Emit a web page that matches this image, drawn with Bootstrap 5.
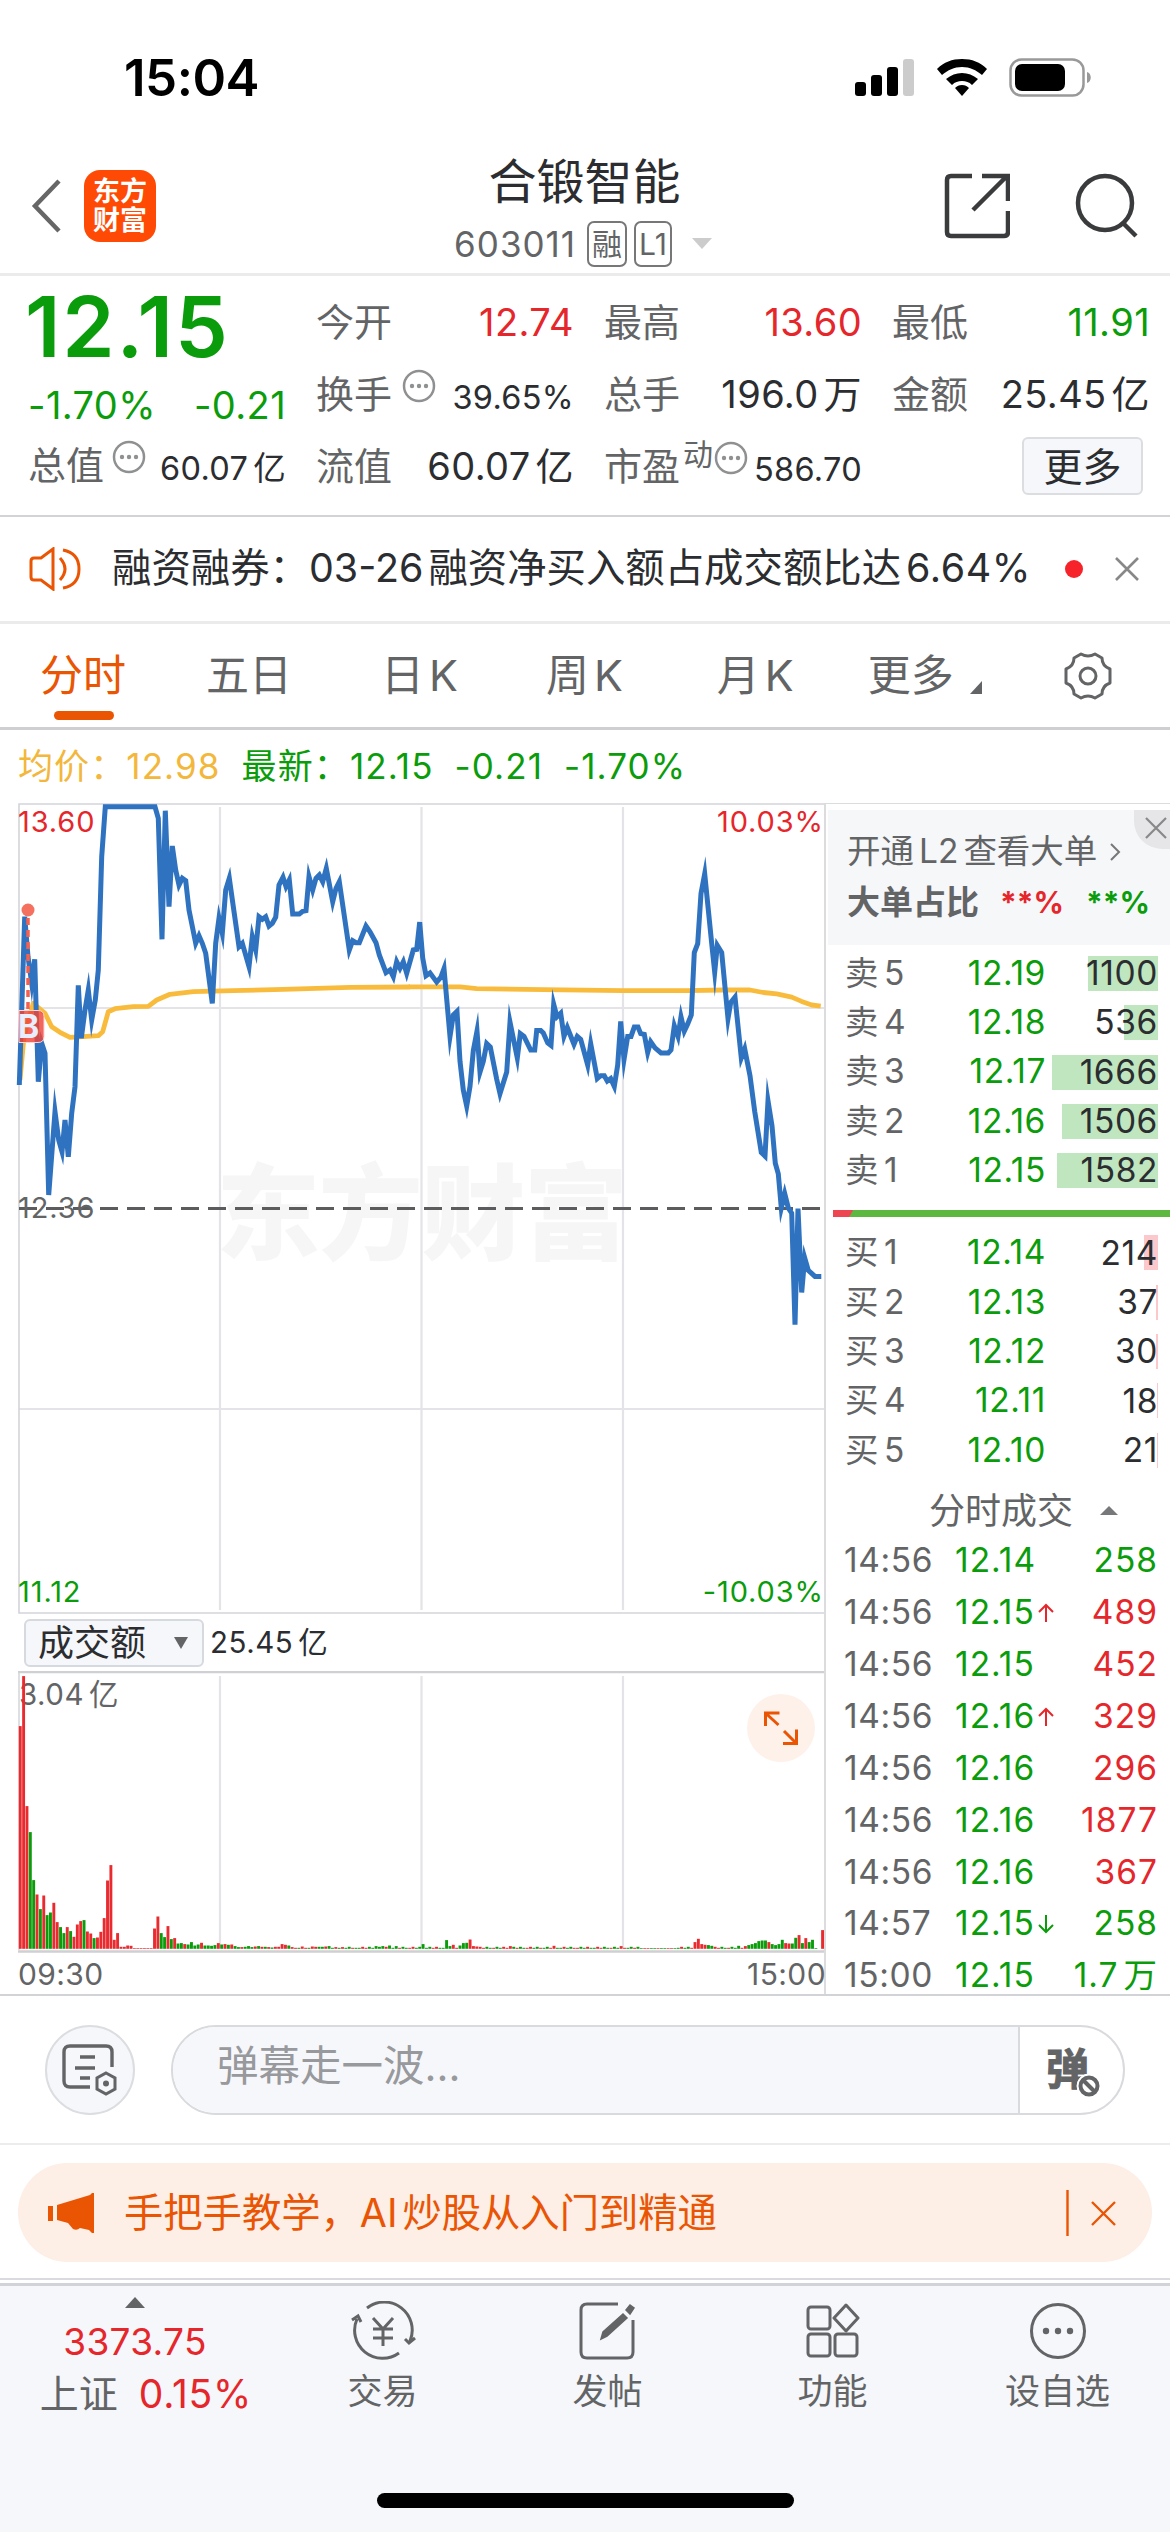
<!DOCTYPE html>
<html lang="zh-CN">
<head>
<meta charset="utf-8">
<meta name="viewport" content="width=device-width, initial-scale=1">
<title>合锻智能 603011</title>
<link href="https://cdn.jsdelivr.net/npm/bootstrap@5.3.0/dist/css/bootstrap.min.css" rel="stylesheet">
<style>
:root{--up:#e5262b;--down:#0a9c0a;--ink:#2b2d30;--dim:#636466;--brand:#ea5504;--soft:#f6f7fa;--rule:#d2d3d6}
body{width:1170px;height:2532px;overflow:hidden;background:#fff;color:var(--ink);font-family:Inter,"Noto Sans CJK SC",sans-serif;line-height:1;font-size:37px}
svg{display:block;flex:none}
svg text{font-family:Inter,"Noto Sans CJK SC",sans-serif}
.up{color:var(--up)}.down{color:var(--down)}.dim{color:var(--dim)}.brand{color:var(--brand)}
/* breathing space between latin digits and a following or leading Han character */
.gl{margin-left:5px}.gr{margin-right:5px}
.statusbar{height:118px;padding:37px 78px 0 124px}
.clock{font-size:51px;font-weight:600;line-height:82px;letter-spacing:-.5px;color:#000}
.statusbar svg{margin-top:21px}
.topbar{height:158px;border-bottom:3px solid #ebebec;padding:0 32px 0 31px}
.topside{width:320px;margin-top:21px}
.applogo{width:72px;height:72px;border-radius:16px;background:#ff4a05;color:#fff;font-size:27px;font-weight:700;line-height:29px;margin-left:23px}
.stockname{font-size:48px;line-height:60px}
.code{font-size:35px;line-height:64px;letter-spacing:1px;margin-left:-3px}
.tagbox{border:2px solid #777;border-radius:7px;height:46px;line-height:43px;font-size:30px;padding:0 3px;letter-spacing:0}
.quote{height:241px;border-bottom:2px solid var(--rule);padding:10px 19px 0 28px;gap:30px}
.quote>div{width:258px}
.qrow{height:72px}
.qlab{font-size:38px;color:var(--dim)}
.qval{font-size:38px;letter-spacing:.4px}
.qsm{font-size:32.5px;padding-top:9px;letter-spacing:.3px}
.bigprice{font-size:84px;font-weight:600;height:82px;line-height:82px;letter-spacing:1.8px;margin-left:-3px}
.morebtn{width:121px;height:58px;background:#f5f7fa;border:2px solid #dcdde0;border-radius:6px;font-size:39px;margin-right:7px;color:var(--ink)}
.notice{height:107px;border-bottom:3px solid #ebebec;padding:0 31px 0 29px;font-size:39.4px}
.reddot{width:18px;height:18px;border-radius:50%;background:#f6242a}
.tabs{height:106px;border-bottom:3px solid #cfcfd1;font-size:43px;color:var(--dim)}
.tabs>div{position:relative;white-space:nowrap}
.tabs .on::after{content:"";position:absolute;left:14px;width:60px;bottom:-23px;height:9px;border-radius:5px;background:var(--brand)}
.avgline{height:73px;padding:0 18px;font-size:35px;letter-spacing:1.1px}
.leftcol{width:826px;border-right:2px solid #dcdcdf}
.selrow{height:57px;padding:5px 0 4px 24px}
.selbox{width:180px;height:48px;border:2px solid #d6d9dd;border-radius:6px;background:#f5f7fa;font-size:36px;padding:0 14px 0 12px}
.rightcol{width:344px;height:1191px;overflow:hidden;border-top:1px solid #dcdcdf}
.l2box{margin:6px 0 0 2px;height:135px;background:#f6f7f9;padding:8px 0 0 19px;position:relative;font-size:33.5px;color:var(--dim)}
.l2x{position:absolute;right:0;top:0;width:36px;height:39px;background:#e6e6e9;border-bottom-left-radius:28px}
.lv{height:49.3px;padding:0 12px 0 19px;font-size:33.5px;position:relative;letter-spacing:.6px}
.lv .p{width:130px;text-align:right;position:absolute;right:124px}
.lv .q{position:relative;padding-right:0;height:35px;line-height:35px}
.lv .bar{position:absolute;right:12px;height:35px;top:7px}
.sell .bar{background:#bfe6bf}.buy .bar{background:#fbc9cb}
.ratio{height:7px;margin:15px 2px 11px 7px;background:linear-gradient(120deg,#ee4650 17px,#5cb83f 18px)}
.dealhd{height:60px;padding:12px 0 0 103px;font-size:36px}
.dl{height:51.9px;padding:0 12px 0 18px;font-size:33.5px;letter-spacing:1px}
.dl .t{width:111px;color:var(--dim);letter-spacing:.6px}
.danmu{height:151px;border-top:2px solid var(--rule);border-bottom:2px solid #ececef;padding:0 45px}
.roundbtn{width:90px;height:90px;border:2px solid #dcdde0;border-radius:50%;background:var(--soft)}
.pill{width:954px;height:90px;border:2px solid #d9dadd;border-radius:45px;overflow:hidden}
.pill .inp{width:847px;background:var(--soft);border-right:2px solid #d9dadd;padding-left:44px;line-height:78px;font-size:41.5px;color:#98999c}
.bannerwrap{padding:18px 18px 16px;border-bottom:2px solid #dadbde}
.banner{height:99px;border-radius:50px;background:#fdeee6;padding:0 36px 0 29px;font-size:39.3px}
.footnav{margin-top:3px;height:250px;border-top:3px solid var(--rule);background:#f5f7fa;font-size:35px;color:var(--dim);position:relative}
.footnav>.cell{width:225px;height:150px;padding-top:15px}
.homebar{position:absolute;left:377px;top:207px;width:417px;height:15px;border-radius:8px;background:#000}
</style>
<script src="https://cdn.jsdelivr.net/npm/bootstrap@5.3.0/dist/js/bootstrap.bundle.min.js"></script>
</head>
<body>
<svg width="0" height="0" class="position-absolute"><defs>
<symbol id="dots" viewBox="0 0 34 34"><circle cx="17" cy="17" r="15" fill="none" stroke="#8f9092" stroke-width="2.500"/><g fill="#8f9092"><circle cx="10" cy="17" r="2.200"/><circle cx="17" cy="17" r="2.200"/><circle cx="24" cy="17" r="2.200"/></g></symbol>
</defs></svg>

<header>
<div class="statusbar d-flex justify-content-between align-items-start">
  <div class="clock">15:04</div>
  <svg width="237" height="40" viewBox="0 0 237 40">
    <rect x="0" y="24" width="11" height="14" rx="3"/><rect x="16" y="17" width="11" height="21" rx="3"/><rect x="32" y="9" width="11" height="29" rx="3"/><rect x="48" y="1" width="11" height="37" rx="3" fill="#ccc"/>
    <path d="M107 1c10 0 18 3 25 10l-5 6c-6-5-12-8-20-8s-14 3-20 8l-5-6c7-7 15-10 25-10zM107 15c6 0 11 2 16 6l-6 6c-3-3-6-4-10-4s-7 1-10 4l-6-6c5-4 10-6 16-6zM107 27c3 0 5 1 7 3l-7 8-7-8c2-2 4-3 7-3z"/>
    <rect x="155.500" y="1.500" width="73" height="36" rx="11" fill="none" stroke="#999" stroke-width="2.500"/><rect x="160" y="6" width="50" height="27" rx="7"/><path d="M232 14c5 1 5 10 0 11z" fill="#999"/>
  </svg>
</div>
<div class="topbar d-flex align-items-center justify-content-between">
  <div class="topside d-flex align-items-center">
    <svg width="30" height="54" viewBox="0 0 30 54" fill="none" stroke="#666" stroke-width="4.500"><path d="M28 2 4 27l24 25"/></svg>
    <div class="applogo text-center d-flex flex-column justify-content-center"><span>东方</span><span>财富</span></div>
  </div>
  <div class="text-center" style="margin-top:36px">
    <div class="stockname">合锻智能</div>
    <div class="code dim d-flex align-items-center justify-content-center"><span>603011</span><span class="tagbox" style="margin-left:11px">融</span><span class="tagbox" style="margin-left:7px">L1</span><svg style="margin-left:20px" width="20" height="11"><path d="M0 0h20L10 11z" fill="#ccc"/></svg></div>
  </div>
  <div class="topside d-flex justify-content-end">
    <svg width="66" height="66" viewBox="0 0 66 66" fill="none" stroke="#3a3b3d" stroke-width="4.500"><path d="M28 3H7q-4 0-4 4v52q0 4 4 4h53q4 0 4-4V38M38 3h26v25M63 3 29 37"/></svg>
    <svg class="ms-5" width="80" height="66" viewBox="-14 0 80 66" fill="none" stroke="#3a3b3d" stroke-width="4.500"><circle cx="33" cy="30" r="27"/><path d="M51 50l13 13"/></svg>
  </div>
</div>
</header>

<section class="quote d-flex">
  <div>
    <div class="bigprice down">12.15</div>
    <div class="d-flex justify-content-between align-items-center qval down" style="height:74px"><span>-1.70%</span><span>-0.21</span></div>
    <div class="d-flex align-items-center" style="height:46px"><span class="qlab">总值</span><svg width="34" height="34" class="ms-2 mb-3"><use href="#dots"/></svg><span class="qsm ms-auto text-nowrap">60.07<span class="gl">亿</span></span></div>
  </div>
  <div>
    <div class="qrow d-flex align-items-center justify-content-between"><span class="qlab">今开</span><span class="qval up">12.74</span></div>
    <div class="qrow d-flex align-items-center"><span class="qlab">换手</span><svg width="34" height="34" style="margin-left:10px" class="mb-3"><use href="#dots"/></svg><span class="qsm ms-auto">39.65%</span></div>
    <div class="qrow d-flex align-items-center justify-content-between"><span class="qlab">流值</span><span class="qval">60.07<span class="gl">亿</span></span></div>
  </div>
  <div>
    <div class="qrow d-flex align-items-center justify-content-between"><span class="qlab">最高</span><span class="qval up">13.60</span></div>
    <div class="qrow d-flex align-items-center justify-content-between"><span class="qlab">总手</span><span class="qval">196.0<span class="gl">万</span></span></div>
    <div class="qrow d-flex align-items-center"><span class="qlab">市盈</span><span class="dim mb-4" style="font-size:30px;margin-left:3px">动</span><svg width="34" height="34" class="mb-3" style="margin-left:1px"><use href="#dots"/></svg><span class="qsm ms-auto">586.70</span></div>
  </div>
  <div>
    <div class="qrow d-flex align-items-center justify-content-between"><span class="qlab">最低</span><span class="qval down">11.91</span></div>
    <div class="qrow d-flex align-items-center justify-content-between"><span class="qlab">金额</span><span class="qval">25.45<span class="gl">亿</span></span></div>
    <div class="qrow d-flex align-items-center justify-content-end"><button class="morebtn p-0 lh-1">更多</button></div>
  </div>
</section>

<section class="notice d-flex align-items-center">
  <svg width="52" height="44" viewBox="0 0 52 44" fill="none" stroke="#ea5504" stroke-width="3"><path d="M24 2v40L12 33H5q-3 0-3-3V14q0-3 3-3h7zM31 11q10 11 0 22M34 3q16 3 16 19T34 41"/></svg>
  <span class="text-nowrap" style="margin-left:31px">融资融券：<span class="gr">03-26</span>融资净买入额占成交额比达<span class="gl" style="letter-spacing:.6px">6.64%</span></span>
  <span class="reddot ms-auto"></span>
  <svg style="margin-left:32px" width="24" height="24" viewBox="0 0 24 24" stroke="#888" stroke-width="2.600"><path d="M1 1l22 22M23 1 1 23"/></svg>
</section>

<nav class="tabs d-flex align-items-center">
  <div class="on brand" style="margin-left:40px">分时</div><div style="margin-left:80px">五日</div><div style="margin-left:89px">日<span class="gl">K</span></div><div style="margin-left:88px">周<span class="gl">K</span></div><div style="margin-left:94px">月<span class="gl">K</span></div><div style="margin-left:74px">更多</div>
  <svg class="mt-4" style="margin-left:16px" width="12" height="13"><path d="M12 0v13H0z" fill="#636466"/></svg>
  <svg style="margin-left:81px" width="50" height="48" viewBox="0 0 50 48" fill="none" stroke="#636466" stroke-width="3" stroke-linejoin="round"><path d="M18 2q7 4 14 0l7 4q0 8 8 11v14q-8 3-8 11l-7 4q-7-4-14 0l-7-4q0-8-8-11V17q8-3 8-11z"/><circle cx="25" cy="24" r="8"/></svg>
</nav>

<section class="avgline d-flex align-items-center text-nowrap" style="gap:21px"><span style="color:#f3b73c">均价：12.98</span><span class="down">最新：12.15</span><span class="down">-0.21</span><span class="down">-1.70%</span></section>

<main class="d-flex">
  <div class="leftcol">
    <svg width="824" height="811" viewBox="0 803 824 811">
      <text x="216" y="1252" font-size="104" font-weight="900" fill="#f6f6f7" textLength="412">东方财富</text>
      <g stroke="#e3e3e8" stroke-width="2.200"><path d="M220 807V1610M421.500 807V1610M623 807V1610M19 1008H824M19 1409H824"/></g>
      <path d="M824 804H19V1613H824" fill="none" stroke="#d2d5d9" stroke-width="1.600"/>
      <path d="M19 1208.500H820" stroke="#5c5c5e" stroke-width="3" stroke-dasharray="18 9"/>
      <g font-size="29" letter-spacing=".9"><text x="18" y="832" fill="#e5262b">13.60</text><text x="824" y="832" text-anchor="end" fill="#e5262b">10.03%</text><text x="18" y="1218" fill="#636466">12.36</text><text x="18" y="1602" fill="#0a9c0a">11.12</text><text x="824" y="1602" text-anchor="end" fill="#0a9c0a">-10.03%</text></g>
      <polyline id="avg" fill="none" stroke="#f9bb3c" stroke-width="4.800" stroke-linejoin="round"/>
      <polyline id="price" fill="none" stroke="#2f73c0" stroke-width="5" stroke-miterlimit="10"/>
      <path d="M28 918V1010" stroke="#f4604f" stroke-width="3.500" stroke-dasharray="7 5"/>
      <circle cx="28" cy="910" r="6.500" fill="#f4705f"/>
      <path d="M19 1010.500H38q6 0 6 6v20q0 6-6 6H19z" fill="#ef4438" fill-opacity=".82" stroke="#fbd5d2" stroke-width="1"/>
      <text x="18" y="1038" font-size="32" font-weight="700" fill="#e8eefb">B</text>
    </svg>
    <div class="selrow d-flex align-items-center">
      <div class="selbox d-flex align-items-center justify-content-between"><span>成交额</span><svg width="14" height="12"><path d="M0 0h14L7 12z" fill="#636466"/></svg></div>
      <span class="text-nowrap" style="font-size:29.500px;margin-left:6px;letter-spacing:.5px">25.45<span class="gl">亿</span></span>
    </div>
    <svg width="824" height="284" viewBox="0 1671 824 284">
      <path d="M220 1676V1948M421.500 1676V1948M623 1676V1948" stroke="#e3e3e8" stroke-width="2.200"/>
      <path d="M18 1672H824M18 1951.500H824" stroke="#cfd0d3" stroke-width="2.400"/><path d="M19 1672V1950" stroke="#d2d5d9" stroke-width="1.500"/>
      <text x="19" y="1705" font-size="29.500" fill="#636466" letter-spacing=".5">3.04<tspan dx="5">亿</tspan></text>
      <g id="vol"></g>
      <circle cx="781" cy="1728" r="34" fill="#fef1ea"/>
      <path d="M765.500 1726V1713H779.500M766 1713.500l12.500 11.500M784 1731l12 12M783 1743.500h13.500V1729.500" fill="none" stroke="#ea5504" stroke-width="3"/>
    </svg>
    <div class="d-flex justify-content-between dim" style="height:39px;line-height:39px;font-size:30px;padding-left:18px;letter-spacing:.4px"><span>09:30</span><span style="margin-right:-2px">15:00</span></div>
  </div>

  <aside class="rightcol">
    <div class="l2box">
      <div class="d-flex align-items-center text-nowrap" style="height:71px;padding-bottom:1px;margin-top:-1px"><span>开通</span><span class="gl gr">L2</span><span>查看大单</span><svg style="margin-left:13px" width="11" height="18" fill="none" stroke="#777" stroke-width="2"><path d="M1 1l8 8-8 8"/></svg></div>
      <div class="d-flex align-items-center fw-bold text-nowrap" style="height:51px;margin-top:-10px;padding-bottom:3px;font-size:33px"><span>大单占比</span><span class="up" style="margin-left:21px;font-size:30px">**%</span><span class="down" style="margin-left:22px;font-size:30px">**%</span></div>
      <div class="l2x d-flex align-items-center justify-content-center"><svg class="ms-2 mb-1" width="22" height="22" stroke="#888" stroke-width="2.200"><path d="M1 1l20 20M21 1 1 21"/></svg></div>
    </div>
    <div class="sell" style="padding-top:4px">
      <div class="lv d-flex align-items-center justify-content-between"><i class="bar" style="width:70px"></i><span class="dim">卖<span class="gl">5</span></span><span class="p down">12.19</span><span class="q">1100</span></div>
      <div class="lv d-flex align-items-center justify-content-between"><i class="bar" style="width:34px"></i><span class="dim">卖<span class="gl">4</span></span><span class="p down">12.18</span><span class="q">536</span></div>
      <div class="lv d-flex align-items-center justify-content-between"><i class="bar" style="width:106px"></i><span class="dim">卖<span class="gl">3</span></span><span class="p down">12.17</span><span class="q">1666</span></div>
      <div class="lv d-flex align-items-center justify-content-between"><i class="bar" style="width:96px"></i><span class="dim">卖<span class="gl">2</span></span><span class="p down">12.16</span><span class="q">1506</span></div>
      <div class="lv d-flex align-items-center justify-content-between"><i class="bar" style="width:101px"></i><span class="dim">卖<span class="gl">1</span></span><span class="p down">12.15</span><span class="q">1582</span></div>
    </div>
    <div class="ratio"></div>
    <div class="buy">
      <div class="lv d-flex align-items-center justify-content-between"><i class="bar" style="width:14px"></i><span class="dim">买<span class="gl">1</span></span><span class="p down">12.14</span><span class="q">214</span></div>
      <div class="lv d-flex align-items-center justify-content-between"><i class="bar" style="width:2px"></i><span class="dim">买<span class="gl">2</span></span><span class="p down">12.13</span><span class="q">37</span></div>
      <div class="lv d-flex align-items-center justify-content-between"><i class="bar" style="width:2px"></i><span class="dim">买<span class="gl">3</span></span><span class="p down">12.12</span><span class="q">30</span></div>
      <div class="lv d-flex align-items-center justify-content-between"><i class="bar" style="width:1px"></i><span class="dim">买<span class="gl">4</span></span><span class="p down">12.11</span><span class="q">18</span></div>
      <div class="lv d-flex align-items-center justify-content-between"><i class="bar" style="width:1px"></i><span class="dim">买<span class="gl">5</span></span><span class="p down">12.10</span><span class="q">21</span></div>
    </div>
    <div class="dealhd d-flex align-items-center dim">分时成交<svg style="margin-left:27px" width="18" height="9"><path d="M9 0l9 9H0z" fill="#77787a"/></svg></div>
    <div class="dl d-flex align-items-center"><span class="t">14:56</span><span class="down">12.14</span><span class="ms-auto down">258</span></div>
    <div class="dl d-flex align-items-center"><span class="t">14:56</span><span class="down">12.15</span><svg style="margin-left:3px" width="16" height="20" fill="none" stroke="#e5262b" stroke-width="2"><path d="M8 19V2M1 9l7-7 7 7"/></svg><span class="ms-auto up">489</span></div>
    <div class="dl d-flex align-items-center"><span class="t">14:56</span><span class="down">12.15</span><span class="ms-auto up">452</span></div>
    <div class="dl d-flex align-items-center"><span class="t">14:56</span><span class="down">12.16</span><svg style="margin-left:3px" width="16" height="20" fill="none" stroke="#e5262b" stroke-width="2"><path d="M8 19V2M1 9l7-7 7 7"/></svg><span class="ms-auto up">329</span></div>
    <div class="dl d-flex align-items-center"><span class="t">14:56</span><span class="down">12.16</span><span class="ms-auto up">296</span></div>
    <div class="dl d-flex align-items-center"><span class="t">14:56</span><span class="down">12.16</span><span class="ms-auto up">1877</span></div>
    <div class="dl d-flex align-items-center"><span class="t">14:56</span><span class="down">12.16</span><span class="ms-auto up">367</span></div>
    <div class="dl d-flex align-items-center"><span class="t">14:57</span><span class="down">12.15</span><svg style="margin-left:3px" width="16" height="20" fill="none" stroke="#0a9c0a" stroke-width="2"><path d="M8 1v17M1 11l7 7 7-7"/></svg><span class="ms-auto down">258</span></div>
    <div class="dl d-flex align-items-center"><span class="t">15:00</span><span class="down">12.15</span><span class="ms-auto down">1.7<span class="gl">万</span></span></div>
  </aside>
</main>

<section class="danmu d-flex align-items-center justify-content-between">
  <div class="roundbtn d-flex align-items-center justify-content-center"><svg width="56" height="52" viewBox="0 0 56 52" fill="none" stroke="#636466" stroke-width="3.400"><path d="M28 43H8q-6 0-6-6V8q0-6 6-6h36q6 0 6 6v15M18 13h15M13 24h20M18 34h10"/><path d="M44 29l9 5v11l-9 5-9-5V34z" stroke-width="3"/><circle cx="44" cy="39.500" r="3" fill="#636466" stroke="none"/></svg></div>
  <div class="pill d-flex"><div class="inp">弹幕走一波...</div>
    <div class="dim fw-bold" style="padding-left:26px;font-size:43px;line-height:84px;-webkit-text-stroke:1px #636466">弹</div>
    <svg style="margin:46px 0 0 -13px" width="26" height="26" viewBox="0 0 26 26" fill="none" stroke="#fff"><circle cx="13" cy="13" r="12" fill="#fff"/><circle cx="13" cy="13" r="8.500" stroke="#636466" stroke-width="4"/><path d="M7 7l12 12" stroke="#636466" stroke-width="4"/></svg></div>
</section>

<div class="bannerwrap"><div class="banner brand d-flex align-items-center">
  <svg width="48" height="40" viewBox="0 0 48 40" fill="#ea5504"><path d="M1 13h5v15H1zM10 12 43 2l2-2h2v40h-2l-3-3-9-2q-3 3-7 1l-5-6-11-3z"/></svg>
  <span class="text-nowrap" style="margin-left:29px">手把手教学，<span class="gr">AI</span>炒股从入门到精通</span>
  <svg class="ms-auto" width="50" height="46" fill="none" stroke="#ea5504" stroke-width="2.400"><path d="M1.500 0v46M26 12l23 23M49 12 26 35"/></svg>
</div></div>

<footer class="footnav d-flex">
  <div class="d-flex flex-column align-items-center" style="width:270px;padding-top:11px">
    <svg width="20" height="11"><path d="M10 0l10 11H0z" fill="#636466"/></svg>
    <div class="up" style="font-size:37px;letter-spacing:.3px;margin-top:15px">3373.75</div>
    <div class="text-nowrap d-flex align-items-center" style="font-size:39px;margin-top:14px;padding-left:22px"><span>上证</span><span class="up" style="margin-left:21px;letter-spacing:.8px">0.15%</span></div>
  </div>
  <div class="cell d-flex flex-column align-items-center">
    <svg width="66" height="60" viewBox="0 0 66 60" fill="none" stroke="#636466" stroke-width="3"><path d="M17 7a28 28 0 0 1 43 33M49 52A28 28 0 0 1 7 18M2 19l6-4 3 6M65 37l-6 5-4-4M23 17l10 11 10-11M33 28v17M23 28h20M23 37h20"/></svg><span style="margin-top:13px">交易</span></div>
  <div class="cell d-flex flex-column align-items-center">
    <svg width="58" height="60" viewBox="0 0 58 60" fill="none" stroke="#636466" stroke-width="3"><path d="M39 3H8q-6 0-6 6v42q0 6 6 6h40q6 0 6-6V19"/><path d="M22 38l2-7 20-18 4 4-20 18zM47 9l4-5 4 3-4 6z" fill="#636466" stroke-width="1.500"/></svg><span style="margin-top:13px">发帖</span></div>
  <div class="cell d-flex flex-column align-items-center">
    <svg width="54" height="60" viewBox="0 0 54 60" fill="none" stroke="#636466" stroke-width="3"><rect x="2" y="6" width="22" height="22" rx="3"/><rect x="2" y="33" width="22" height="22" rx="3"/><rect x="29" y="33" width="22" height="22" rx="3"/><path d="M40 4l12 13-12 13-12-13z" stroke-linejoin="round"/></svg><span style="margin-top:13px">功能</span></div>
  <div class="cell d-flex flex-column align-items-center">
    <svg width="60" height="60" viewBox="0 0 60 60" fill="none" stroke="#636466" stroke-width="3"><circle cx="30" cy="30" r="26.500"/><g fill="#636466" stroke="none"><circle cx="18" cy="30" r="3.200"/><circle cx="30" cy="30" r="3.200"/><circle cx="42" cy="30" r="3.200"/></g></svg><span style="margin-top:13px">设自选</span></div>
  <div class="homebar"></div>
</footer>

<script>
// Each series is stored in two sessions with their own scale and origin.
function plot(s,ox,kx,ky){return s.trim().split(/\s+/).map(p=>{const [x,y]=p.split(',');return (ox+x/kx).toFixed(1)+','+(790+y/ky).toFixed(1)}).join(' ')+' '}
const am='58,885 74,380 84,500 95,580 104,508 115,875 125,760 135,790 146,1215 165,965 176,1050 186,1085 195,990 205,1100 215,970 225,890 235,586 244,745 255,660 265,600 275,690 286,630 295,540 305,200 316,50 465,50 475,85 486,448 496,62 507,350 517,168 527,240 537,285 547,265 557,272 567,360 587,460 597,437 607,460 617,490 637,640 647,460 657,385 667,430 677,300 688,265 700,350 717,470 727,460 747,530 757,440 767,480 777,380 787,388 797,380 807,408 817,400 827,382 837,285 849,262 858,290 868,270 878,372 898,372 908,364 918,362 927,260 938,300 948,265 958,255 968,275 979,235 998,335 1008,295 1018,275 1048,480 1058,452 1068,458 1078,458 1098,408 1110,425 1128,458 1138,495 1158,548 1170,540 1180,560 1190,515 1200,535 1210,515 1220,550 1240,480 1250,478';
const pm='20,446 29,370 38,470 48,520 60,512 80,538 92,525 102,500 120,690 130,630 141,620 150,760 160,840 170,885 180,830 190,730 201,675 210,790 220,760 230,710 241,720 260,810 270,850 290,790 300,650 322,750 331,682 342,690 362,728 374,728 380,673 392,673 400,680 413,708 423,715 431,600 441,635 452,625 462,690 472,665 492,712 502,690 512,698 533,770 542,710 562,808 572,800 583,800 592,815 602,808 613,830 623,770 632,648 642,755 653,690 663,690 673,664 684,664 692,682 703,684 713,735 722,705 735,722 753,736 775,736 783,728 793,660 804,690 813,635 823,675 833,655 844,630 853,455 863,430 873,290 884,235 905,430 914,510 922,435 935,455 954,640 962,595 975,580 994,750 1004,725 1020,800 1034,900 1054,1015 1065,1025 1074,870 1086,940 1096,1045 1105,1075 1114,1170 1124,1130 1135,1170 1145,1185 1155,1497 1164,1172 1175,1407 1184,1310 1195,1345 1215,1362 1234,1362';
document.getElementById('price').setAttribute('points',plot(am,0,3,3)+plot(pm,410,3,2.8));
const ya='60,870 72,740 100,640 135,670 155,710 180,727 210,742 250,740 295,737 308,725 325,665 345,656 400,650 445,649 470,630 510,613 580,605 700,602 850,598 1050,592 1230,591';
const yb='0,551 150,551 200,556 400,559 640,562 830,562 940,560 1020,560 1060,567 1100,571 1145,580 1175,592 1205,602 1232,605';
document.getElementById('avg').setAttribute('points',plot(ya,0,3,3)+plot(yb,410,3,2.8));
// Turnover per minute: r = up, g = down.
const v={};
'668r 818r 428r 350g 206g 163r 119g 160r 101g 109g 138r 80r 65g 47g 65r 53g 36r 73r 83r 86g 52r 46r 32g 34r 51r 92r 205r 251r 27r 47r 6r 6r 10r 9r 2r 2r 2r 2r 2r 2r 61r 97r 47g 35g 68r 29g 32r 16g 17g 14r 13g 20g 10g 13g 18r 10g 10g 9g 11g 17r 13g 14r 12g 13r 8g 5g 5r 6g 8g 5g 7r 8g 6r 6g 5r 4g 6r 6r 14r 12r 10g 5r 3r 3g 7r 3r 3g 7r 6r 6g 6g 7r 8g 3g 5r 3g 5r 3g 6g 3r'.split(' ').forEach((b,i)=>v[i]=b);
for(let i=100;i<236;i++)v[i]=(i>184&&i<196?2:3+(i*7%5>2?3:0))+((i*5%7)<4?'g':'r');
Object.assign(v,{106:'8g',108:'8g',110:'10g',112:'8g',120:'14g',127:'26g',128:'8g',129:'12r',131:'10g',132:'17g',133:'18g',134:'28r',135:'8r',136:'7r',146:'8r',159:'9r',179:'8r',201:'20r',202:'30r',203:'14r',204:'12r',205:'11g',206:'9g',214:'9g',216:'8r',217:'11g',218:'14g',219:'17g',220:'23g',221:'25g',222:'25g',223:'20r',224:'14g',225:'11g',226:'14g',227:'27g',228:'17r',229:'16r',230:'16g',231:'33g',232:'41r',233:'17g',234:'32r',235:'20g',236:'27g',237:'2g',239:'56r'});
document.getElementById('vol').innerHTML=Object.entries(v).map(([i,b])=>{const h=parseInt(b)/3;return `<rect x="${(18.8+i*3.357).toFixed(2)}" y="${(1948.8-h).toFixed(1)}" width="2.9" height="${h.toFixed(1)}" fill="${b.endsWith('r')?'#e92b30':'#0a9c0a'}"/>`}).join('');
</script>
</body>
</html>
